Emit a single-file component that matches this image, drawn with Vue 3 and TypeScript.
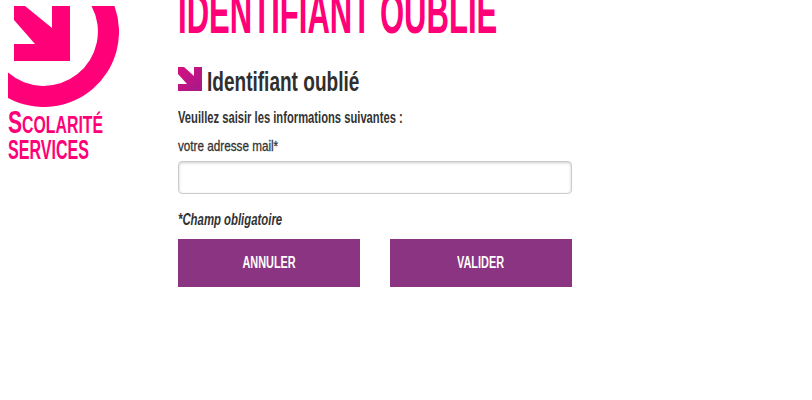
<template>
  <div class="page">
    <aside class="brand">
      <svg class="logo" width="111" height="101" viewBox="8 6 111 101">
        <path
          fill="#ff0078"
          d="M114.5 6 A75.3 75.3 0 0 1 8 98 L8 72.6 A54.3 54.3 0 0 0 91.5 6 Z"
        />
        <path fill="#ff0078" d="M14 6 H25 L52 28 V6 H70 V61 H14 V44 H35 L14 20 Z" />
      </svg>
      <div class="brand-name"><span class="cap">S</span>COLARITÉ</div>
      <div class="brand-sub">SERVICES</div>
    </aside>

    <main class="content">
      <h1 class="title"><span class="squeeze title-text">IDENTIFIANT OUBLIE</span></h1>
      <div class="subtitle">
        <svg width="24" height="24" viewBox="0 0 24 24">
          <defs>
            <linearGradient id="arrowFill" x1="0" y1="0" x2="1" y2="1">
              <stop offset="0" stop-color="#d6107f" />
              <stop offset="1" stop-color="#a5198a" />
            </linearGradient>
          </defs>
          <path fill="url(#arrowFill)" d="M0 0 H6 L16 9 V0 H24 V24 H0 V17 H9 L0 7 Z" />
        </svg>
        <h2><span class="squeeze">Identifiant oublié</span></h2>
      </div>
      <p class="intro"><span class="squeeze">Veuillez saisir les informations suivantes :</span></p>
      <label class="field-label" for="mail"><span class="squeeze">votre adresse mail*</span></label>
      <input id="mail" class="field" type="text" />
      <p class="required"><span class="squeeze">*Champ obligatoire</span></p>
      <div class="actions">
        <button class="btn" type="button"><span class="squeeze-c">ANNULER</span></button>
        <button class="btn" type="button"><span class="squeeze-c">VALIDER</span></button>
      </div>
    </main>
  </div>
</template>

<script setup lang="ts">
</script>

<style scoped>
.page {
  display: flex;
  width: 812px;
  height: 400px;
  overflow: hidden;
  background: #fff;
  font-family: "Liberation Sans", Arial, sans-serif;
  color: #333;
}
.brand {
  width: 178px;
  flex: none;
  padding: 6px 0 0 8px;
  box-sizing: border-box;
  color: #ff0078;
}
.logo {
  display: block;
}
.brand-name {
  font-size: 24px;
  font-weight: 700;
  line-height: 30px;
  transform: scaleX(0.66);
  transform-origin: left;
  white-space: nowrap;
}
.cap {
  font-size: 32px;
}
.brand-sub {
  font-size: 27px;
  font-weight: 700;
  line-height: 24px;
  margin-top: -2px;
  transform: scaleX(0.595);
  transform-origin: left;
  white-space: nowrap;
}
.content {
  width: 394px;
  flex: none;
}
.squeeze {
  display: inline-block;
  transform: scaleX(0.72);
  transform-origin: left;
  white-space: nowrap;
}
.squeeze-c {
  display: inline-block;
  transform: scaleX(0.68);
  white-space: nowrap;
}
.title {
  margin: -21px 0 0;
  font-size: 57px;
  line-height: 68px;
  font-weight: 700;
  color: #ff0078;
}
.title-text {
  transform: scaleX(0.545);
}
.subtitle {
  display: flex;
  align-items: center;
  gap: 5px;
  margin-top: 20px;
  height: 24px;
}
.subtitle svg {
  flex: none;
}
.subtitle h2 {
  margin: 5px 0 0;
  font-size: 28px;
  line-height: 32px;
  font-weight: 700;
  color: #2f2f2f;
}
.subtitle .squeeze {
  transform: scaleX(0.68);
}
.intro {
  margin: 17px 0 0;
  font-size: 16px;
  line-height: 20px;
  font-weight: 700;
}
.intro .squeeze {
  transform: scaleX(0.7);
}
.field-label {
  display: block;
  margin-top: 9px;
  font-size: 15px;
  line-height: 18px;
}
.field-label .squeeze {
  transform: scaleX(0.78);
  -webkit-text-stroke: 0.3px #333;
}
.field {
  display: block;
  box-sizing: border-box;
  width: 100%;
  height: 33px;
  margin-top: 6px;
  border: 1px solid #ccc;
  border-radius: 4px;
  box-shadow: inset 0 1px 3px rgba(0, 0, 0, 0.2);
  background: #fff;
}
.required {
  margin: 16px 0 0;
  font-size: 16px;
  line-height: 20px;
  font-style: italic;
  font-weight: 700;
}
.required .squeeze {
  transform: scaleX(0.71);
}
.actions {
  display: flex;
  justify-content: space-between;
  margin-top: 9px;
}
.btn {
  width: 182px;
  height: 48px;
  padding: 0;
  border: 0;
  background: #8b3582;
  color: #fff;
  font-family: "Liberation Sans", Arial, sans-serif;
  font-size: 16px;
  font-weight: 700;
}
</style>
